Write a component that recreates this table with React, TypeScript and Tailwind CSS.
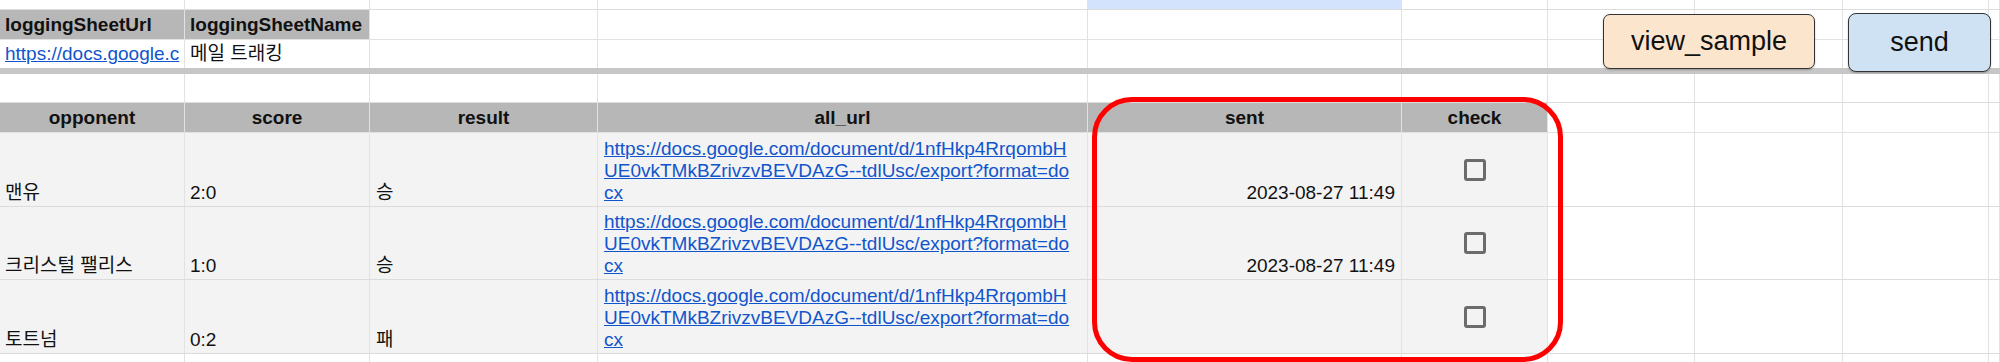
import clsx from 'clsx';

const widths = [
  'w-[185px]',
  'w-[185px]',
  'w-[228px]',
  'w-[490px]',
  'w-[314px]',
  'w-[146px]',
  'w-[147px]',
  'w-[148px]',
  'w-[146px]',
  'flex-1',
];

const headers = ['opponent', 'score', 'result', 'all_url', 'sent', 'check'];

const matches = [
  { opponent: '맨유', score: '2:0', result: '승', sent: '2023-08-27 11:49', h: 'h-[74px]' },
  { opponent: '크리스털 팰리스', score: '1:0', result: '승', sent: '2023-08-27 11:49', h: 'h-[73px]' },
  { opponent: '토트넘', score: '0:2', result: '패', sent: '', h: 'h-[74px]' },
];

function Cell({ i, className, children }: { i: number; className?: string; children?: React.ReactNode }) {
  return (
    <div className={clsx('shrink-0 h-full border-r border-[#e2e2e2] overflow-hidden', widths[i], className)}>
      {children}
    </div>
  );
}

function EmptyCells({ from }: { from: number }) {
  return (
    <>
      {widths.slice(from).map((_, k) => (
        <Cell key={k} i={from + k} />
      ))}
    </>
  );
}

function DocLink() {
  return (
    <a href="#" className="text-[#1155cc] underline leading-[22px]">
      https://docs.google.com/document/d/1nfHkp4RrqombH
      <br />
      UE0vkTMkBZrivzvBEVDAzG--tdlUsc/export?format=do
      <br />
      cx
    </a>
  );
}

export default function App() {
  return (
    <div className="relative w-[2000px] h-[362px] overflow-hidden bg-white text-[19px] text-[#111] font-['Liberation_Sans','Noto_Sans_CJK_KR',sans-serif]">
      <div className="flex flex-col h-full">
        {/* top partial row */}
        <div className="flex h-[10px] shrink-0 border-b border-[#dcdcdc]">
          {widths.map((_, i) => (
            <Cell key={i} i={i} className={i === 4 ? 'bg-[#d3e3fd]' : ''} />
          ))}
        </div>

        {/* logging settings */}
        <div className="flex h-[30px] shrink-0 border-b border-[#e2e2e2]">
          <Cell i={0} className="bg-[#b7b7b7] border-[#a9a9a9] font-bold flex items-center px-[5px] leading-[22px]">
            loggingSheetUrl
          </Cell>
          <Cell i={1} className="bg-[#b7b7b7] font-bold flex items-center px-[5px] leading-[22px]">
            loggingSheetName
          </Cell>
          <EmptyCells from={2} />
        </div>
        <div className="flex h-[28px] shrink-0">
          <Cell i={0} className="flex items-center pl-[5px] whitespace-nowrap leading-[22px]">
            <a href="#" className="text-[#1155cc] underline">
              https://docs.google.c
            </a>
          </Cell>
          <Cell i={1} className="flex items-center pl-[5px] whitespace-nowrap leading-[22px]">
            메일 트래킹
          </Cell>
          <EmptyCells from={2} />
        </div>

        {/* frozen divider */}
        <div className="h-[6px] shrink-0 bg-[#c6c6c6]" />

        <div className="flex h-[29px] shrink-0 border-b border-[#dcdcdc]">
          <EmptyCells from={0} />
        </div>

        {/* table header */}
        <div className="flex h-[30px] shrink-0 border-b border-[#e2e2e2]">
          {headers.map((h, i) => (
            <Cell
              key={h}
              i={i}
              className="bg-[#b7b7b7] border-[#a9a9a9] font-bold flex items-center justify-center leading-[22px]"
            >
              {h}
            </Cell>
          ))}
          <EmptyCells from={6} />
        </div>

        {/* data rows */}
        {matches.map((m) => (
          <div key={m.opponent} className={clsx('flex shrink-0 border-b border-[#dcdcdc]', m.h)}>
            <Cell i={0} className="bg-[#f3f3f3] border-[#dcdcdc] flex items-end pl-[5px] pb-[2px] leading-[22px] whitespace-nowrap">
              {m.opponent}
            </Cell>
            <Cell i={1} className="bg-[#f3f3f3] border-[#dcdcdc] flex items-end pl-[5px] pb-[2px] leading-[22px]">
              {m.score}
            </Cell>
            <Cell i={2} className="bg-[#f3f3f3] border-[#dcdcdc] flex items-end pl-[6px] pb-[2px] leading-[22px]">
              {m.result}
            </Cell>
            <Cell i={3} className="bg-[#f3f3f3] border-[#dcdcdc] flex items-end pl-[6px] pb-[2px] whitespace-nowrap">
              <DocLink />
            </Cell>
            <Cell i={4} className="bg-[#f3f3f3] border-[#dcdcdc] flex items-end justify-end pr-[6px] pb-[2px] leading-[22px]">
              {m.sent}
            </Cell>
            <Cell i={5} className="bg-[#f3f3f3] border-[#dcdcdc] flex items-center justify-center">
              <span className="w-[22px] h-[22px] border-[3px] border-[#6b6b6b] rounded-[3px]" />
            </Cell>
            <EmptyCells from={6} />
          </div>
        ))}

        <div className="flex flex-1">
          <EmptyCells from={0} />
        </div>
      </div>

      {/* sheet drawings */}
      <button className="absolute left-[1603px] top-[14px] w-[212px] h-[55px] bg-[#fce5cd] border-[1.5px] border-[#333] rounded-[7px] text-[27px] text-[#111] shadow-[0_1px_2px_rgba(0,0,0,0.25)]">
        view_sample
      </button>
      <button className="absolute left-[1848px] top-[13px] w-[143px] h-[59px] bg-[#cfe2f3] border-[1.5px] border-[#333] rounded-[8px] text-[27px] text-[#111] shadow-[0_1px_2px_rgba(0,0,0,0.25)]">
        send
      </button>

      {/* highlight */}
      <div className="absolute left-[1092px] top-[97px] w-[471px] h-[265px] border-[5px] border-[#ff0000] rounded-[40px] pointer-events-none" />
    </div>
  );
}
